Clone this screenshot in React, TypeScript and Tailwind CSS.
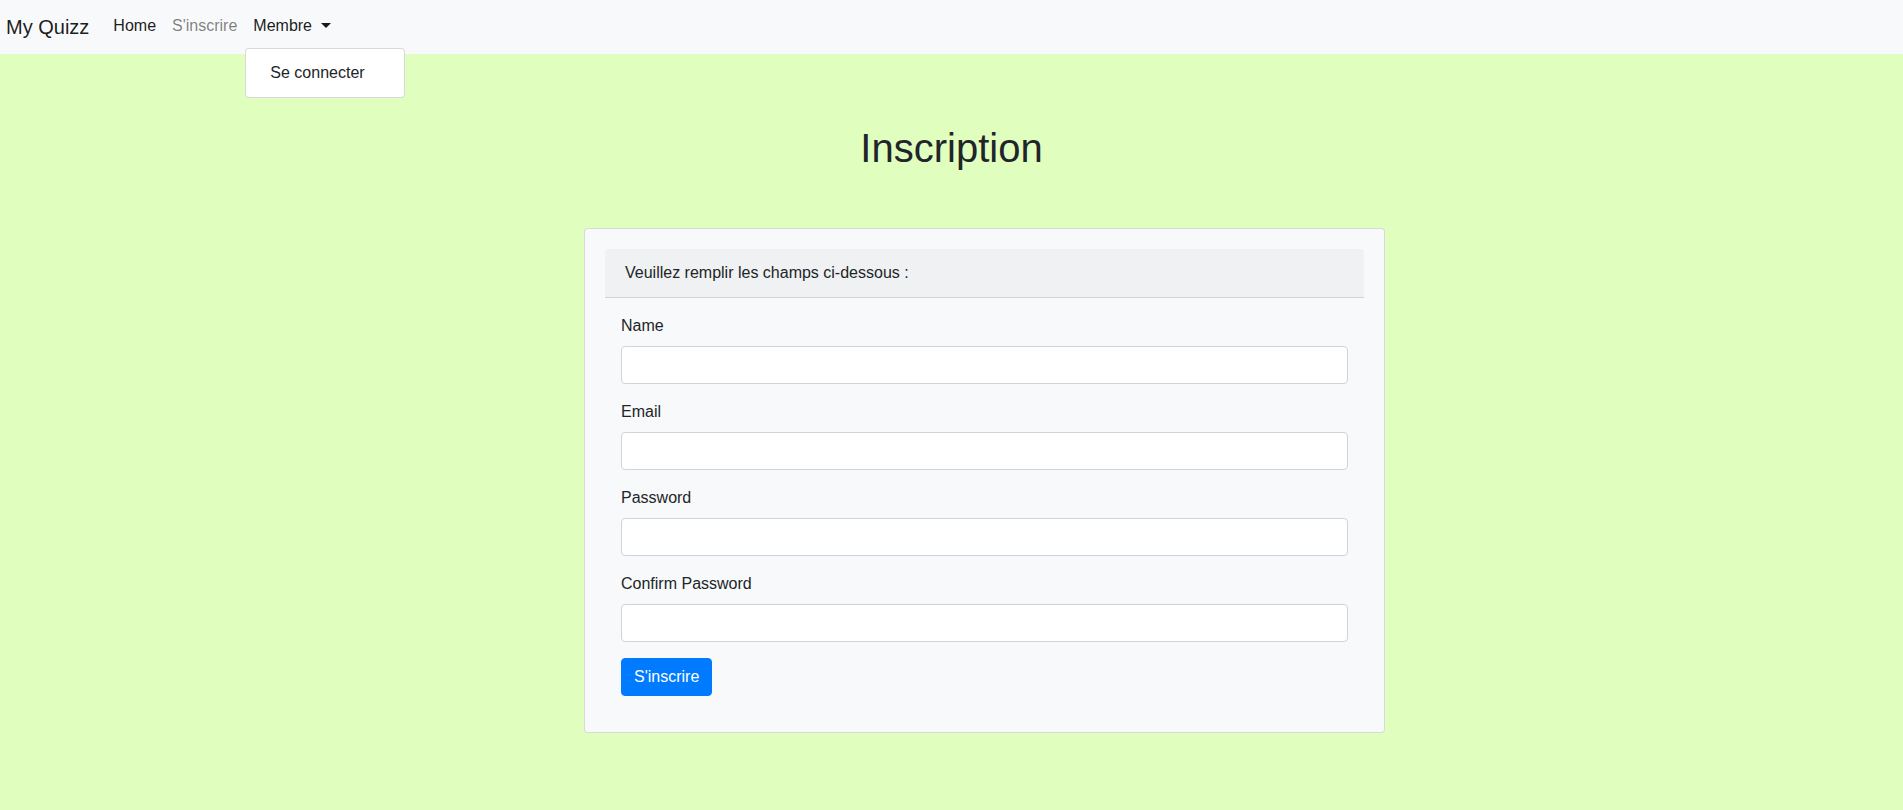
import { useState } from "react";

const fields = [
  { name: "name", label: "Name", type: "text" },
  { name: "email", label: "Email", type: "email" },
  { name: "password", label: "Password", type: "password" },
  { name: "confirmPassword", label: "Confirm Password", type: "password" },
];

export default function App() {
  const [menuOpen, setMenuOpen] = useState(true);
  const [formData, setFormData] = useState<Record<string, string>>({
    name: "",
    email: "",
    password: "",
    confirmPassword: "",
  });

  const handleChange = (e: React.ChangeEvent<HTMLInputElement>) => {
    setFormData({ ...formData, [e.target.name]: e.target.value });
  };

  return (
    <div className="min-h-screen bg-[#e0ffbf] font-['Liberation_Sans',Arial,sans-serif] text-[16px] text-[#212529]">
      {/* navbar */}
      <nav className="flex h-[54px] items-start bg-[#f8f9fa] pl-[6px]">
        <a
          href="#"
          className="mt-[7px] mr-4 py-[5px] text-[20px] leading-[30px] text-[rgba(0,0,0,0.9)]"
        >
          My Quizz
        </a>
        <ul className="mt-[6px] flex">
          <li>
            <a href="#" className="block px-2 py-2 leading-6 text-[rgba(0,0,0,0.9)]">
              Home
            </a>
          </li>
          <li>
            <a href="#" className="block px-2 py-2 leading-6 text-[rgba(0,0,0,0.5)]">
              S'inscrire
            </a>
          </li>
          <li className="relative">
            <button
              type="button"
              onClick={() => setMenuOpen(!menuOpen)}
              className="flex items-center px-2 py-2 leading-6 text-[rgba(0,0,0,0.9)]"
            >
              Membre
              <span className="ml-[9px] mb-[2px] inline-block h-0 w-0 border-x-[5px] border-t-[5px] border-x-transparent border-t-current" />
            </button>
            {menuOpen && (
              <div className="absolute left-0 top-[42px] z-10 w-[160px] rounded-[4px] border border-[rgba(0,0,0,0.15)] bg-white py-2">
                <a href="#" className="block px-6 py-1 leading-6 text-[#212529]">
                  Se connecter
                </a>
              </div>
            )}
          </li>
        </ul>
      </nav>

      <h1 className="mt-[70px] text-center text-[40px] font-medium leading-[48px]">
        Inscription
      </h1>

      <div className="mt-[56px] ml-[584px] w-[801px] rounded-[4px] border border-[rgba(0,0,0,0.125)] bg-[#f8f9fa] p-5">
        <div className="rounded-t-[3px] border-b border-[rgba(0,0,0,0.125)] bg-[rgba(0,0,0,0.03)] px-5 py-3 leading-6">
          Veuillez remplir les champs ci-dessous :
        </div>
        <form className="p-4" onSubmit={(e) => e.preventDefault()}>
          {fields.map((f) => (
            <div key={f.name} className="mb-4">
              <label htmlFor={f.name} className="mb-2 block leading-6">
                {f.label}
              </label>
              <input
                id={f.name}
                name={f.name}
                type={f.type}
                value={formData[f.name]}
                onChange={handleChange}
                className="block h-[38px] w-full rounded-[4px] border border-[#ced4da] bg-white px-3 py-1.5 leading-6 text-[#495057] focus:outline-none"
              />
            </div>
          ))}
          <button
            type="submit"
            className="rounded-[4px] border border-[#007bff] bg-[#007bff] px-3 py-1.5 leading-6 text-white"
          >
            S'inscrire
          </button>
        </form>
      </div>
    </div>
  );
}
